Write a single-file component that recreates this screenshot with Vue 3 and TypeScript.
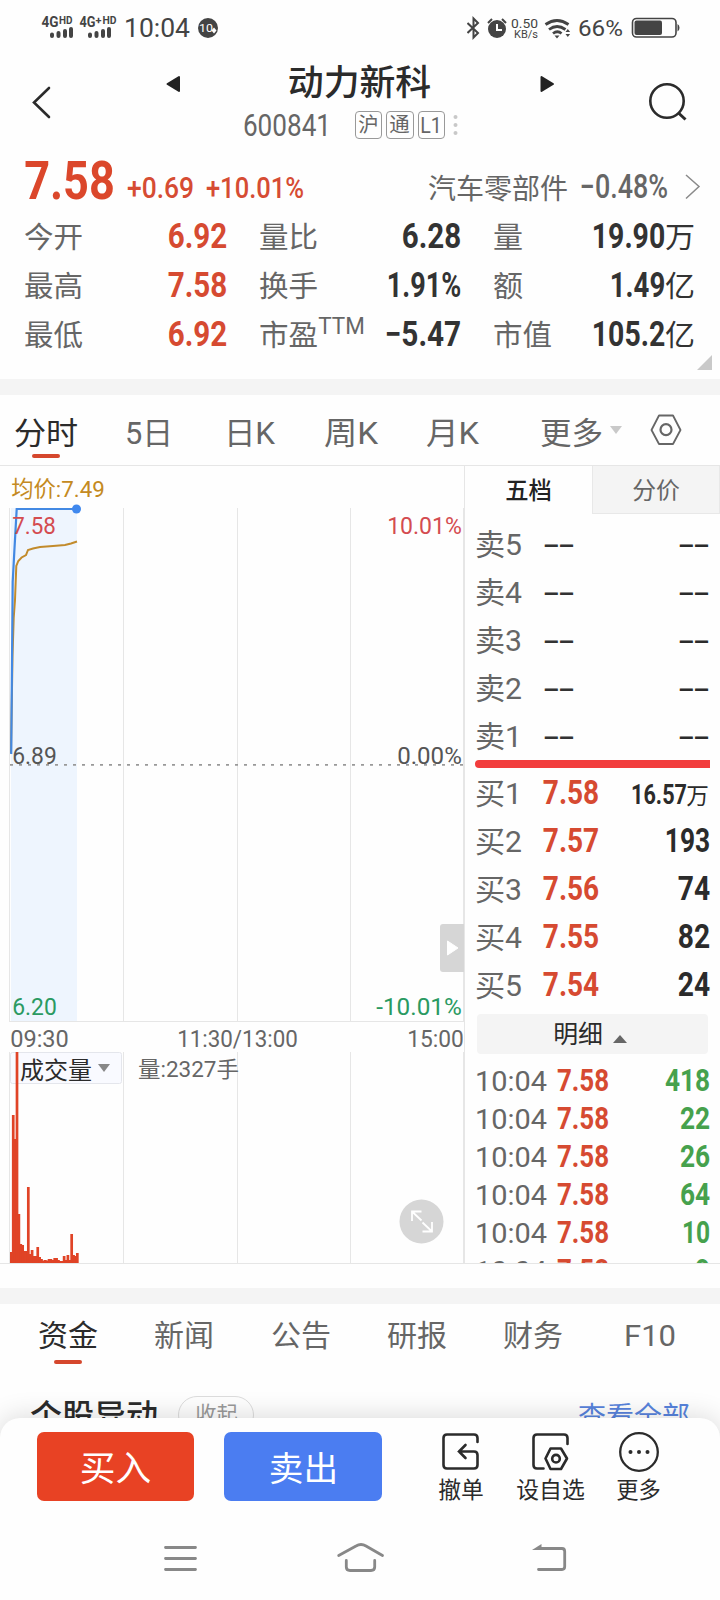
<script setup lang="ts">
import { h, type FunctionalComponent } from 'vue'

// Single-line label squeezed to a fixed ink width; the bottom edge of its box is the baseline.
const Fit: FunctionalComponent<{ t: string; w: number; s: number }> = (p) =>
  h('svg', { class: 'fit', width: p.w, height: Math.round(p.s * 0.72) }, [
    h(
      'text',
      {
        x: -0.035 * p.s,
        y: Math.round(p.s * 0.72),
        'font-size': p.s,
        fill: 'currentColor',
        textLength: p.w + 0.07 * p.s,
        lengthAdjust: 'spacingAndGlyphs',
      },
      p.t,
    ),
  ])
Fit.props = ['t', 'w', 's']

interface Stat { label: string; lw: number; sup?: string; value: string; vw: number; unit?: string; up?: boolean }
const stats: Stat[] = [
  { label: '今开', lw: 57, value: '6.92', vw: 57, up: true },
  { label: '量比', lw: 57, value: '6.28', vw: 57 },
  { label: '量', lw: 28, value: '19.90', vw: 71, unit: '万' },
  { label: '最高', lw: 57, value: '7.58', vw: 57, up: true },
  { label: '换手', lw: 57, value: '1.91%', vw: 72 },
  { label: '额', lw: 28, value: '1.49', vw: 53, unit: '亿' },
  { label: '最低', lw: 57, value: '6.92', vw: 57, up: true },
  { label: '市盈', lw: 57, sup: 'TTM', value: '−5.47', vw: 74 },
  { label: '市值', lw: 57, value: '105.2', vw: 71, unit: '亿' },
]

const periods = [
  { t: '分时', w: 62, on: true },
  { t: '5日', w: 46 },
  { t: '日K', w: 49 },
  { t: '周K', w: 52 },
  { t: '月K', w: 51 },
]

const sells = ['卖5', '卖4', '卖3', '卖2', '卖1']
const buys = [
  { n: '买1', p: '7.58', q: '16.57', w: 54, s: 27, unit: '万' },
  { n: '买2', p: '7.57', q: '193', w: 43, s: 33 },
  { n: '买3', p: '7.56', q: '74', w: 30, s: 33 },
  { n: '买4', p: '7.55', q: '82', w: 30, s: 33 },
  { n: '买5', p: '7.54', q: '24', w: 30, s: 33 },
]
const ticks = [
  { q: '418', w: 43 },
  { q: '22', w: 28 },
  { q: '26', w: 28 },
  { q: '64', w: 28 },
  { q: '10', w: 26 },
  { q: '9', w: 13 },
]

const volumes = [
  11, 148, 124, 211, 49, 19, 18, 12, 12, 76, 9, 13, 7, 7, 16, 6, 4, 2.5, 3, 2.5, 4, 4, 3, 5, 5, 3, 2, 2, 7, 3, 8, 3,
  29, 8, 7, 10,
]
const gridX = [9.5, 123.5, 237.5, 350.5, 463.5]

const chartLabels = [
  { t: '均价:7.49', x: 12, y: 30.5, w: 92, s: 22.5, c: 'gold' },
  { t: '7.58', x: 13, y: 68, w: 42, s: 23, c: 'red' },
  { t: '10.01%', x: 388, y: 68, w: 73, s: 23, c: 'red' },
  { t: '6.89', x: 13, y: 298, w: 43, s: 23, c: 'dark' },
  { t: '0.00%', x: 398, y: 298, w: 63, s: 23, c: 'dark' },
  { t: '6.20', x: 13, y: 549, w: 43, s: 23, c: 'green' },
  { t: '-10.01%', x: 377, y: 549, w: 84, s: 23, c: 'green' },
  { t: '09:30', x: 11, y: 581, w: 57, s: 23, c: 'grey' },
  { t: '11:30/13:00', x: 178, y: 581, w: 119, s: 23, c: 'grey' },
  { t: '15:00', x: 408, y: 581, w: 55, s: 23, c: 'grey' },
]

const news = [
  { t: '资金', w: 58, on: true },
  { t: '新闻', w: 58 },
  { t: '公告', w: 58 },
  { t: '研报', w: 58 },
  { t: '财务', w: 58 },
  { t: 'F10', w: 50 },
]
</script>

<template>
  <div class="app">
    <header class="status">
      <svg width="220" height="56" class="st">
        <g font-weight="700" font-size="14">
          <text x="41.5" y="27" textLength="17" lengthAdjust="spacingAndGlyphs">4G</text>
          <text x="59" y="24" font-size="10" textLength="13.5" lengthAdjust="spacingAndGlyphs">HD</text>
          <text x="79.5" y="27" textLength="16" lengthAdjust="spacingAndGlyphs">4G</text>
          <text x="95.5" y="24" font-size="11">+</text>
          <text x="102.5" y="24" font-size="10" textLength="14" lengthAdjust="spacingAndGlyphs">HD</text>
        </g>
        <g stroke="#444" stroke-width="4" stroke-linecap="round">
          <path d="M52 34.500V36M58.500 33V36M65 31V36M71 29V36M90 34.500V36M96.500 33V36M103 31V36M109 29V36" />
        </g>
        <text x="124" y="37" font-size="25.5" textLength="66" lengthAdjust="spacingAndGlyphs">10:04</text>
        <circle cx="208" cy="28" r="10" />
        <text x="199" y="32" font-size="11.5" fill="#fff" textLength="14" lengthAdjust="spacingAndGlyphs">10</text>
        <path d="M214 27.500l2.500 3-2.500 3-2.500-3z" fill="#fff" />
      </svg>
      <svg width="253" height="56" viewBox="467 0 253 56" class="st">
        <path d="M467.500 23l10.500 10-4.500 4.500v-19l4.500 4.500-10.500 10" fill="none" stroke="#444" stroke-width="2" />
        <circle cx="497" cy="29" r="9" />
        <path d="M488 23l4-4M506 23l-4-4" stroke="#444" stroke-width="2" />
        <path d="M497 24v6h5" fill="none" stroke="#fff" stroke-width="2" />
        <text x="511" y="28" font-size="12.5" textLength="27" lengthAdjust="spacingAndGlyphs">0.50</text>
        <text x="514" y="38" font-size="11" textLength="24" lengthAdjust="spacingAndGlyphs">KB/s</text>
        <g fill="none" stroke="#444" stroke-width="2.800">
          <path d="M545.500 24.500q11.500-8 23 0M549 29.500q8-6 16.500 0M553 33.500q4.500-3.500 8.500 0" />
        </g>
        <path d="M554.500 35.500h5l-2.500 3zM565.500 32l2.300-3 2.300 3zM565.500 34l2.300 3 2.300-3z" />
        <text x="578" y="36" font-size="22" textLength="45" lengthAdjust="spacingAndGlyphs">66%</text>
        <rect x="632.500" y="18.500" width="43.500" height="18.500" rx="4" fill="none" stroke="#444" stroke-width="1.600" />
        <rect x="634.500" y="20.500" width="27.500" height="14.500" rx="2" />
        <path d="M677.500 24q2 1 2 3.700t-2 3.700z" />
      </svg>
    </header>

    <div class="head">
      <svg class="back" width="20" height="34"><path d="M17 2L2 16.500L17 31" fill="none" stroke="#2b2b2b" stroke-width="2.600" stroke-linecap="round" /></svg>
      <svg class="prev" width="15" height="18"><path d="M13 2v14L1.500 9z" fill="#222" stroke="#222" stroke-width="2" stroke-linejoin="round" /></svg>
      <div class="title">
        <Fit t="动力新科" :w="141" :s="35.5" class="name" />
        <div class="sub">
          <Fit t="600841" :w="86" :s="30.5" />
          <i class="tag first"><Fit t="沪" :w="19" :s="20" /></i>
          <i class="tag"><Fit t="通" :w="19" :s="20" /></i>
          <i class="tag"><Fit t="L1" :w="20" :s="22" /></i>
          <svg class="dots" width="5" height="22" fill="#c8c8c8"><circle cx="2.500" cy="3" r="2" /><circle cx="2.500" cy="11" r="2" /><circle cx="2.500" cy="19" r="2" /></svg>
        </div>
      </div>
      <svg class="next" width="15" height="18"><path d="M1.500 2v14L13 9z" fill="#222" stroke="#222" stroke-width="2" stroke-linejoin="round" /></svg>
      <svg class="search" width="40" height="40" fill="none" stroke="#2b2b2b" stroke-width="2.600"><circle cx="19" cy="19" r="16.700" /><path d="M30.500 31l7 6.500" stroke-width="3" /></svg>
    </div>

    <div class="price">
      <Fit t="7.58" :w="87" :s="53" class="big" />
      <Fit t="+0.69" :w="65" :s="30" class="chg" />
      <Fit t="+10.01%" :w="96" :s="30" class="chg" />
      <Fit t="汽车零部件" :w="138" :s="28" class="sector" />
      <Fit t="−0.48%" :w="86" :s="33" class="spct" />
      <svg class="more" width="16" height="26"><path d="M1 1L14 12.500L1 24.500" fill="none" stroke="#8a8a8a" stroke-width="1.500" /></svg>
    </div>

    <div class="stats">
      <div v-for="s in stats" :key="s.label" class="stat">
        <Fit :t="s.label" :w="s.lw" :s="29" />
        <Fit v-if="s.sup" :t="s.sup" :w="45" :s="23" class="sup" />
        <Fit :t="s.value" :w="s.vw" :s="34.5" class="val" :class="{ up: s.up }" />
        <Fit v-if="s.unit" :t="s.unit" :w="28" :s="29" class="unit" />
      </div>
    </div>
    <div class="corner"><svg width="15" height="15"><path d="M15 0v15H0z" fill="#c9c9c9" /></svg></div>
    <div class="band"></div>

    <nav class="periods">
      <div v-for="(p, i) in periods" :key="p.t" class="per" :class="['p' + i, { on: p.on }]">
        <Fit :t="p.t" :w="p.w" :s="31" />
        <b v-if="p.on"></b>
      </div>
      <div class="per pm"><Fit t="更多" :w="61" :s="31" /></div>
      <svg class="caret" width="12" height="8"><path d="M0 0h12L6 8z" fill="#c9c9c9" /></svg>
      <svg class="hex" width="32" height="32" fill="none" stroke="#666" stroke-width="1.800"><path d="M9 1.500h14l7.500 14.500l-7.500 14H9L1.500 16z" stroke-linejoin="round" /><circle cx="16" cy="15.700" r="5.500" stroke-width="2.200" /></svg>
    </nav>

    <main class="main">
      <svg class="chart" width="464" height="797" viewBox="0 0 464 797">
        <rect x="11" y="42" width="66" height="513" fill="#eef5fe" />
        <g stroke="#e6e6e6">
          <path v-for="x in gridX" :key="x" :d="`M${x} 42V555M${x} 586V797`" />
          <path d="M9 555.500H464" />
        </g>
        <path d="M10 298.800H464" stroke="#999" stroke-width="1.800" stroke-dasharray="3 6" />
        <path d="M11 287L12.500 190L13.700 152L15 134L16.300 100L18.300 95L21.600 91.500L26 89L28 84L33 82.500L40 81L53 80L65 79L71 77.500L77 75.500" fill="none" stroke="#c28b2c" stroke-width="2" />
        <path d="M11.200 288L12.700 116L14.300 86L16.700 43H76" fill="none" stroke="#4389e3" stroke-width="2.200" />
        <circle cx="76.500" cy="43" r="4.500" fill="#3f88ee" />
        <rect x="10.500" y="586.500" width="111" height="31" rx="2" fill="#f9faff" stroke="#e4e6ec" />
        <rect v-for="(v, i) in volumes" :key="i" :x="10 + i * 1.885" :y="797 - v" width="2.7" :height="v" fill="#e04326" />
        <text v-for="l in chartLabels" :key="l.t" :class="l.c" :x="l.x - 0.8" :y="l.y" :font-size="l.s" :textLength="l.w + 1.6" lengthAdjust="spacingAndGlyphs">{{ l.t }}</text>
        <text x="20" y="612.5" font-size="23.5" fill="#2b2b2b" textLength="72" lengthAdjust="spacingAndGlyphs">成交量</text>
        <path d="M98 598h12l-6 8z" fill="#888" />
        <text x="138" y="611" font-size="22" class="grey" textLength="101" lengthAdjust="spacingAndGlyphs">量:2327手</text>
        <path d="M464 458h-21q-3 0-3 3v42q0 3 3 3h21z" fill="#d6d6d6" />
        <path d="M447.500 475v14l10.500-7z" fill="#fff" stroke="#fff" stroke-linejoin="round" />
        <circle cx="421.500" cy="755.500" r="22" fill="#d6d6d6" />
        <path d="M412 755v-9.500h9.500M412 745.500l9.500 9M432 756v9.500h-9.500M432 765.500l-9.500-9" fill="none" stroke="#fff" stroke-width="1.800" />
      </svg>

      <section class="book">
        <div class="btabs">
          <div class="bt on"><Fit t="五档" :w="45" :s="23.5" /></div>
          <div class="bt"><Fit t="分价" :w="46" :s="23.5" /></div>
        </div>
        <div class="rows sell">
          <div v-for="s in sells" :key="s" class="row">
            <Fit :t="s" :w="45" :s="30" class="lab" />
            <Fit t="--" :w="28" :s="33" class="dash" />
            <Fit t="--" :w="28" :s="33" class="dash qty" />
          </div>
        </div>
        <div class="ratio"></div>
        <div class="rows buy">
          <div v-for="b in buys" :key="b.n" class="row">
            <Fit :t="b.n" :w="45" :s="30" class="lab" />
            <Fit :t="b.p" :w="54" :s="33" class="bp" />
            <Fit :t="b.q" :w="b.w" :s="b.s" class="qty" />
            <Fit v-if="b.unit" :t="b.unit" :w="21" :s="22.5" class="qunit" />
          </div>
        </div>
        <div class="detail">
          <Fit t="明细" :w="48" :s="24.5" />
          <svg width="14" height="8"><path d="M0 8h14L7 0z" fill="#666" /></svg>
        </div>
        <div class="ticks">
          <div v-for="(k, i) in ticks" :key="i" class="tick">
            <Fit t="10:04" :w="70" :s="28.5" />
            <Fit t="7.58" :w="50" :s="31" class="tp" />
            <Fit :t="k.q" :w="k.w" :s="31" class="tq" />
          </div>
        </div>
      </section>
    </main>
    <div class="band second"></div>

    <nav class="news">
      <div v-for="n in news" :key="n.t" class="nt" :class="{ on: n.on }">
        <Fit :t="n.t" :w="n.w" :s="29.5" />
        <b v-if="n.on"></b>
      </div>
    </nav>
    <div class="moves">
      <Fit t="个股异动" :w="126" :s="32" class="mt" />
      <span class="pill"><Fit t="收起" :w="41" :s="21.5" /></span>
      <Fit t="查看全部" :w="110" :s="28" class="all" />
    </div>

    <footer class="foot">
      <div class="acts">
        <div class="btn buyb"><Fit t="买入" :w="69" :s="35" /></div>
        <div class="btn sellb"><Fit t="卖出" :w="67" :s="34.5" /></div>
        <div class="act a1">
          <svg width="40" height="40" fill="none" stroke="#2b2b2b" stroke-width="2.600" stroke-linecap="round"><path d="M36.500 10V6q0-3.500-3.500-3.500H6Q2.500 2.500 2.500 6v27q0 3.500 3.500 3.500h27q3.500 0 3.500-3.500v-10q0-3.500-3.500-3.500H18M24.500 13L18 19.500L24.500 26" /></svg>
          <Fit t="撤单" :w="44" :s="22.5" />
        </div>
        <div class="act a2">
          <svg width="40" height="40" fill="none" stroke="#2b2b2b" stroke-width="2.600" stroke-linecap="round"><path d="M36.500 12V6q0-3.500-3.500-3.500H6Q2.500 2.500 2.500 6v27q0 3.500 3.500 3.500h6.500M19.500 16.500h10.500l6 10l-6 10.500h-10.500l-5-10.500z" stroke-linejoin="round" /><circle cx="25" cy="26.700" r="3.800" /></svg>
          <Fit t="设自选" :w="67" :s="22.5" />
        </div>
        <div class="act a3">
          <svg width="40" height="40"><circle cx="20" cy="20" r="18.800" fill="none" stroke="#2b2b2b" stroke-width="2.300" /><g fill="#2b2b2b"><circle cx="11.500" cy="20" r="2" /><circle cx="20" cy="20" r="2" /><circle cx="28.500" cy="20" r="2" /></g></svg>
          <Fit t="更多" :w="43" :s="22.5" />
        </div>
      </div>
      <svg class="sys" width="720" height="60" viewBox="0 1530 720 60" fill="none" stroke="#888" stroke-width="2.800" stroke-linecap="round">
        <path d="M165.500 1547.500H195.500M165.500 1558.500H195.500M165.500 1569.500H195.500" />
        <path d="M338.700 1555.500L356 1546Q361 1543 366 1546L382.500 1555.500M346.300 1560.500V1567Q346.300 1570.500 350 1570.500H371Q374.700 1570.500 374.700 1567V1560.500" />
        <path d="M540 1548.500H562Q564.700 1548.500 564.700 1551.500V1566.500Q564.700 1569.500 562 1569.500H538.500" />
        <path d="M532 1550L541.500 1544V1550Z" fill="#888" stroke="none" />
      </svg>
    </footer>
  </div>
</template>

<style>
html,
body {
  background: #fefefe;
}
</style>

<style scoped>
.app {
  position: relative;
  width: 720px;
  height: 1600px;
  overflow: hidden;
  background: #fefefe;
  color: #666;
  font-family: Roboto, 'Noto Sans CJK SC', sans-serif;
}
svg {
  display: block;
  flex: none;
}
.fit {
  overflow: visible;
}
.status {
  display: flex;
  justify-content: space-between;
  height: 56px;
}
.st {
  fill: #444;
}
.head {
  display: flex;
  height: 94px;
}
.back {
  margin: 30px 0 0 32px;
}
.prev {
  margin: 19px 0 0 114px;
}
.title {
  width: 215px;
  margin-left: 62px;
}
.name {
  color: #2b2b2b;
  font-weight: 500;
  margin: 13px 0 0 46px;
}
.sub {
  display: flex;
  align-items: center;
  height: 28px;
  margin: 16px 0 0 1px;
}
.tag {
  display: flex;
  align-items: center;
  justify-content: center;
  box-sizing: border-box;
  width: 28px;
  height: 28px;
  margin-left: 4px;
  border: 1px solid #999;
  border-radius: 4px;
  font-style: normal;
}
.tag.first {
  margin-left: 25px;
}
.dots {
  margin-left: 8px;
}
.next {
  margin: 19px 0 0 82px;
}
.search {
  margin: 26px 0 0 93px;
}
.price {
  display: flex;
  align-items: flex-end;
  height: 48px;
  padding-left: 26px;
}
.big {
  color: #db472b;
  font-weight: 700;
  margin-bottom: -1px;
}
.chg {
  color: #d64c33;
  font-weight: 500;
  margin-left: 14px;
}
.chg:nth-child(2) {
  margin-left: 15px;
}
.sector {
  margin: 0 0 -1px 126px;
}
.spct {
  margin-left: 14px;
  font-weight: 500;
}
.more {
  margin: 0 0 -2px 18px;
}
.stats {
  display: grid;
  grid-template-columns: 202px 201px 201px;
  column-gap: 33px;
  grid-template-rows: 50px 49px 49px;
  padding-left: 25px;
}
.stat {
  display: flex;
  align-items: flex-end;
}
.sup {
  margin: 0 0 12px 2px;
}
.val {
  margin-left: auto;
  margin-right: 1px;
  color: #333;
  font-weight: 700;
}
.up {
  color: #d64a31;
}
.unit {
  margin: 0 1px 0 1px;
  color: #333;
}
.corner {
  display: flex;
  justify-content: flex-end;
  padding: 9px 8px 0 0;
  box-sizing: border-box;
  height: 33px;
}
.band {
  height: 16px;
  background: #f4f4f4;
}
.periods {
  display: flex;
  box-sizing: border-box;
  height: 71px;
  padding: 27px 0 0 15px;
  border-bottom: 1px solid #e6e6e6;
}
.per.on,
.nt.on {
  color: #2b2b2b;
}
.per b,
.nt b {
  display: block;
  width: 28px;
  height: 4px;
  border-radius: 2px;
  background: #d5472d;
  margin: 10px auto 0;
}
.p1 {
  margin-left: 49px;
}
.p2 {
  margin-left: 53px;
}
.p3 {
  margin-left: 51px;
}
.p4 {
  margin-left: 50px;
}
.pm {
  margin-left: 63px;
}
.caret {
  margin: 4px 0 0 8px;
}
.hex {
  margin: -8px 0 0 28px;
}
.main {
  display: flex;
  height: 797px;
  border-bottom: 1px solid #e6e6e6;
}
.red {
  fill: #d44c50;
}
.gold {
  fill: #c48a22;
}
.dark {
  fill: #555;
}
.grey {
  fill: #666;
}
.green {
  fill: #2a9a62;
}
.book {
  width: 255px;
  height: 797px;
  border-left: 1px solid #e6e6e6;
  overflow: hidden;
}
.btabs {
  display: flex;
  height: 48px;
}
.bt {
  flex: 1;
  display: flex;
  justify-content: center;
  padding-top: 16px;
  box-sizing: border-box;
  border: 1px solid #e8e8e8;
  border-top: 0;
  background: #f4f4f4;
}
.bt.on {
  background: #fefefe;
  border: 0;
  color: #222;
  font-weight: 500;
}
.row {
  display: flex;
  align-items: flex-end;
  height: 48px;
  padding: 0 11px;
}
.sell .row:first-child {
  height: 41px;
}
.dash {
  color: #333;
  margin: 0 0 -1px 24px;
}
.qty {
  margin-left: auto;
  color: #2b2b2b;
  font-weight: 700;
}
.dash.qty {
  margin-right: 1px;
  margin-left: auto;
  font-weight: 400;
}
.qunit {
  margin: 0 1px 0 1px;
  color: #2b2b2b;
}
.ratio {
  height: 8px;
  margin: 13px 10px 0;
  background: #f23d3d;
  border-radius: 4px 0 0 4px;
}
.buy .row:first-child {
  height: 36px;
}
.bp {
  margin-left: 23px;
  color: #d64a31;
  font-weight: 700;
}
.detail {
  display: flex;
  align-items: flex-end;
  justify-content: center;
  gap: 11px;
  box-sizing: border-box;
  height: 40px;
  margin: 18px 12px 0;
  padding: 0 4px 11px 0;
  border-radius: 4px;
  background: #f4f4f4;
  color: #2b2b2b;
}
.tick {
  display: flex;
  align-items: flex-end;
  height: 38px;
  padding: 0 11px;
}
.tick:first-child {
  height: 37px;
}
.tp {
  margin-left: 12px;
  color: #d64a31;
  font-weight: 700;
}
.tq {
  margin-left: auto;
  color: #46a14d;
  font-weight: 700;
}
.second {
  margin-top: 24px;
}
.news {
  display: flex;
  gap: 58.3px;
  height: 62px;
  padding: 21px 0 0 39px;
}
.nt:last-child {
  margin-left: 5px;
}
.nt b {
  margin-top: 14px;
}
.moves {
  display: flex;
  align-items: flex-start;
  padding: 17px 31px 0;
}
.mt {
  color: #2b2b2b;
  font-weight: 500;
}
.pill {
  display: flex;
  justify-content: center;
  box-sizing: border-box;
  width: 76px;
  height: 38px;
  margin: -8px 0 0 21px;
  padding-top: 10px;
  border: 1px solid #ddd;
  border-radius: 19px;
  color: #999;
}
.all {
  margin: 3px 0 0 auto;
  color: #5783dc;
}
.foot {
  position: absolute;
  left: 0;
  top: 1418px;
  width: 720px;
  height: 182px;
  background: #fefefe;
  border-radius: 20px 20px 0 0;
  box-shadow: 0 0 28px rgba(0, 0, 0, 0.16);
}
.acts {
  display: flex;
  height: 98px;
  padding: 14px 0 0 37px;
}
.btn {
  display: flex;
  align-items: center;
  justify-content: center;
  box-sizing: border-box;
  width: 157px;
  height: 69px;
  padding-top: 4px;
  border-radius: 7px;
  color: #fff;
}
.buyb {
  background: #e84224;
}
.sellb {
  width: 158px;
  margin-left: 30px;
  background: #4b7df1;
}
.act {
  display: flex;
  flex-direction: column;
  align-items: center;
  gap: 10px;
  color: #2b2b2b;
}
.a1 {
  margin-left: 57px;
}
.a2 {
  margin-left: 34px;
}
.a3 {
  margin-left: 33px;
}
</style>
